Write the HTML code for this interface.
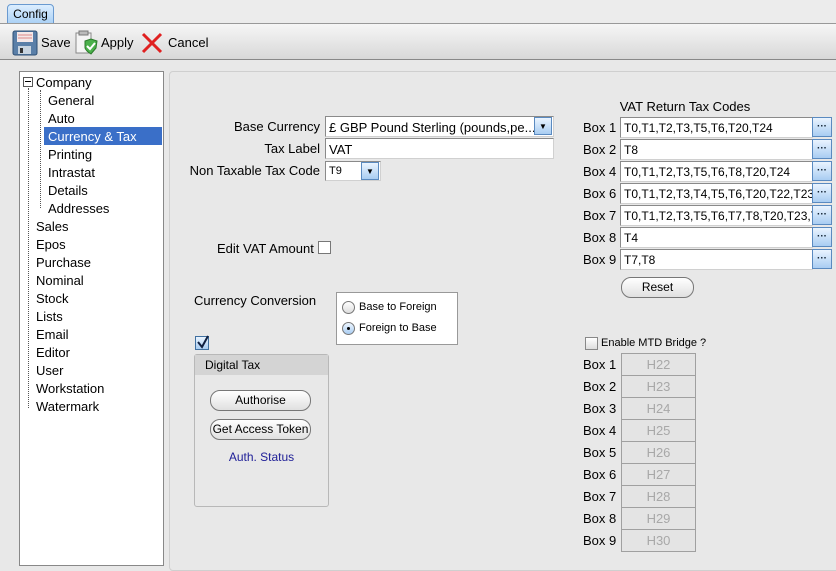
<!DOCTYPE html>
<html><head><style>
*{box-sizing:border-box;margin:0;padding:0}
body{width:836px;height:562px;overflow:hidden;background:#e8e8e8;font-family:"Liberation Sans",sans-serif;font-size:12px;color:#000;position:relative}
.a{position:absolute;white-space:nowrap}
.r{text-align:right}
.fld{position:absolute;background:#fff;border:1px solid #8a8a8a;border-right-color:#d0d0d0;border-bottom-color:#d0d0d0;height:21px;padding:3px 0 0 3px;overflow:hidden;white-space:nowrap}
.btn{position:absolute;width:20px;height:20px;border:1px solid #5a8ac0;background:linear-gradient(#eaf4ff,#a9cdf2);font-size:10px;font-weight:bold;text-align:center;line-height:18px;color:#123}
.dd{position:absolute;width:18px;height:18px;border:1px solid #5a8ac0;background:linear-gradient(#eaf4ff,#a9cdf2);font-size:8px;text-align:center;line-height:17px}
.pb{position:absolute;border:1px solid #777;border-radius:10px;background:linear-gradient(#fff,#e0e0e0);text-align:center;height:21px;line-height:19px}
.mtd{position:absolute;left:621px;width:75px;height:23px;border:1px solid #a0a0a0;background:#e4e4e4;color:#a8a8a8;text-align:center;line-height:21px;font-size:13px}
.ml{position:absolute;left:583px;font-size:13px}
.t{position:absolute;font-size:13px}
</style></head><body>
<div class="a" style="left:0;top:0;width:836px;height:24px;background:#ececec"></div>
<div class="a" style="left:7px;top:4px;width:47px;height:21px;border:1px solid #6a9ad0;border-radius:4px 4px 0 0;background:linear-gradient(#dceeff,#a9d0f5);text-align:center;line-height:19px;font-size:12px">Config</div>
<div class="a" style="left:0;top:23px;width:836px;height:37px;background:linear-gradient(#f6f6f6,#d8d8d8);border-top:1px solid #999;border-bottom:1px solid #888"></div>
<svg class="a" style="left:12px;top:30px" width="26" height="26" viewBox="0 0 26 26"><rect x="1" y="1" width="24" height="24" rx="2" fill="#5a7fa8" stroke="#2f4f74"/><rect x="5" y="2" width="16" height="10" fill="#f4e8e8"/><line x1="6" y1="5" x2="20" y2="5" stroke="#d88"/><line x1="6" y1="8" x2="20" y2="8" stroke="#d88"/><rect x="6" y="16" width="13" height="8" fill="#c8d4e0"/><rect x="8" y="18" width="3" height="5" fill="#333"/></svg>
<div class="t" style="left:41px;top:35px">Save</div>
<svg class="a" style="left:73px;top:30px" width="26" height="26" viewBox="0 0 26 26"><rect x="3" y="3" width="15" height="20" fill="#f4f4f4" stroke="#888"/><rect x="6" y="1" width="9" height="4" fill="#bbb" stroke="#777"/><path d="M12 11 L18 9 L24 11 L23 18 Q18 24 18 24 Q13 21 12 18Z" fill="#4bb04b" stroke="#2a7a2a"/><path d="M14 16 L17 19 L22 13" stroke="#fff" stroke-width="2" fill="none"/></svg>
<div class="t" style="left:101px;top:35px">Apply</div>
<svg class="a" style="left:140px;top:31px" width="24" height="24"><path d="M3 3 L21 21 M21 3 L3 21" stroke="#e02020" stroke-width="3"/></svg>
<div class="t" style="left:168px;top:35px">Cancel</div>

<div class="a" style="left:19px;top:71px;width:145px;height:495px;background:#fff;border:1px solid #888"></div>
<div class="a" style="left:23px;top:77px;width:10px;height:10px;border:1px solid #555;background:#fff"></div>
<div class="a" style="left:25px;top:81px;width:6px;height:1px;background:#000"></div>
<div class="a" style="left:28px;top:88px;width:0;height:320px;border-left:1px dotted #555"></div>
<div class="a" style="left:40px;top:90px;width:0;height:118px;border-left:1px dotted #555"></div>
<div class="a" style="left:44px;top:127px;width:118px;height:18px;background:#3a6fc8"></div>
<div class="t" style="left:36px;top:75px">Company</div>
<div class="t" style="left:48px;top:93px">General</div>
<div class="t" style="left:48px;top:111px">Auto</div>
<div class="t" style="left:48px;top:129px;color:#fff">Currency &amp; Tax</div>
<div class="t" style="left:48px;top:147px">Printing</div>
<div class="t" style="left:48px;top:165px">Intrastat</div>
<div class="t" style="left:48px;top:183px">Details</div>
<div class="t" style="left:48px;top:201px">Addresses</div>
<div class="t" style="left:36px;top:219px">Sales</div>
<div class="t" style="left:36px;top:237px">Epos</div>
<div class="t" style="left:36px;top:255px">Purchase</div>
<div class="t" style="left:36px;top:273px">Nominal</div>
<div class="t" style="left:36px;top:291px">Stock</div>
<div class="t" style="left:36px;top:309px">Lists</div>
<div class="t" style="left:36px;top:327px">Email</div>
<div class="t" style="left:36px;top:345px">Editor</div>
<div class="t" style="left:36px;top:363px">User</div>
<div class="t" style="left:36px;top:381px">Workstation</div>
<div class="t" style="left:36px;top:399px">Watermark</div>

<div class="a" style="left:169px;top:71px;width:680px;height:500px;border:1px solid #cfcfcf;border-radius:4px"></div>

<div class="t r" style="left:180px;width:140px;top:119px">Base Currency</div>
<div class="fld" style="left:325px;top:116px;width:229px;font-size:13px">£ GBP Pound Sterling (pounds,pe...</div>
<div class="dd" style="left:534px;top:117px">▼</div>
<div class="t r" style="left:180px;width:140px;top:141px">Tax Label</div>
<div class="fld" style="left:325px;top:138px;width:229px;font-size:13px">VAT</div>
<div class="t r" style="left:180px;width:140px;top:163px">Non Taxable Tax Code</div>
<div class="fld" style="left:325px;top:161px;width:56px;height:20px;font-size:11px">T9</div>
<div class="dd" style="left:361px;top:162px">▼</div>

<div class="t" style="left:217px;top:241px">Edit VAT Amount</div>
<div class="a" style="left:318px;top:241px;width:13px;height:13px;border:1px solid #777;background:#fff"></div>

<div class="t" style="left:194px;top:293px">Currency Conversion</div>
<div class="a" style="left:336px;top:292px;width:122px;height:53px;background:#fff;border:1px solid #999"></div>
<div class="a" style="left:342px;top:301px;width:13px;height:13px;border:1px solid #777;border-radius:50%;background:linear-gradient(#fff,#ddd)"></div>
<div class="a" style="left:359px;top:301px;font-size:11px">Base to Foreign</div>
<div class="a" style="left:342px;top:322px;width:13px;height:13px;border:1px solid #777;border-radius:50%;background:linear-gradient(#eef6ff,#a9cdf2)"></div>
<div class="a" style="left:347px;top:327px;width:3px;height:3px;border-radius:50%;background:#000"></div>
<div class="a" style="left:359px;top:322px;font-size:11px">Foreign to Base</div>

<div class="a" style="left:195px;top:336px;width:14px;height:14px;border:1px solid #4070a0;background:linear-gradient(#eaf4ff,#a9cdf2)"></div>
<svg class="a" style="left:196px;top:335px" width="14" height="14"><path d="M2 7 L6 12 L12 1" stroke="#102040" stroke-width="2" fill="none"/></svg>
<div class="a" style="left:194px;top:354px;width:135px;height:153px;border:1px solid #b8b8b8;border-radius:3px;background:#e8e8e8"></div>
<div class="a" style="left:195px;top:355px;width:133px;height:20px;background:#d4d4d4;padding:3px 0 0 10px;font-size:12px">Digital Tax</div>
<div class="pb" style="left:210px;top:390px;width:101px">Authorise</div>
<div class="pb" style="left:210px;top:419px;width:101px">Get Access Token</div>
<div class="a" style="left:194px;width:135px;text-align:center;top:450px;color:#202098;font-size:12px">Auth. Status</div>

<div class="t" style="left:570px;width:230px;text-align:center;top:99px">VAT Return Tax Codes</div>
<div class="ml" style="top:120px">Box 1</div><div class="fld" style="left:620px;top:117px;width:193px">T0,T1,T2,T3,T5,T6,T20,T24</div><div class="btn" style="left:812px;top:117px">···</div>
<div class="ml" style="top:142px">Box 2</div><div class="fld" style="left:620px;top:139px;width:193px">T8</div><div class="btn" style="left:812px;top:139px">···</div>
<div class="ml" style="top:164px">Box 4</div><div class="fld" style="left:620px;top:161px;width:193px">T0,T1,T2,T3,T5,T6,T8,T20,T24</div><div class="btn" style="left:812px;top:161px">···</div>
<div class="ml" style="top:186px">Box 6</div><div class="fld" style="left:620px;top:183px;width:193px">T0,T1,T2,T3,T4,T5,T6,T20,T22,T23,T24</div><div class="btn" style="left:812px;top:183px">···</div>
<div class="ml" style="top:208px">Box 7</div><div class="fld" style="left:620px;top:205px;width:193px">T0,T1,T2,T3,T5,T6,T7,T8,T20,T23,T24</div><div class="btn" style="left:812px;top:205px">···</div>
<div class="ml" style="top:230px">Box 8</div><div class="fld" style="left:620px;top:227px;width:193px">T4</div><div class="btn" style="left:812px;top:227px">···</div>
<div class="ml" style="top:252px">Box 9</div><div class="fld" style="left:620px;top:249px;width:193px">T7,T8</div><div class="btn" style="left:812px;top:249px">···</div>
<div class="pb" style="left:621px;top:277px;width:73px">Reset</div>

<div class="a" style="left:585px;top:337px;width:13px;height:13px;border:1px solid #888;background:linear-gradient(#fff,#ddd)"></div>
<div class="a" style="left:601px;top:337px;font-size:11px">Enable MTD Bridge ?</div>
<div class="ml" style="top:357px">Box 1</div><div class="mtd" style="top:353px">H22</div>
<div class="ml" style="top:379px">Box 2</div><div class="mtd" style="top:375px">H23</div>
<div class="ml" style="top:401px">Box 3</div><div class="mtd" style="top:397px">H24</div>
<div class="ml" style="top:423px">Box 4</div><div class="mtd" style="top:419px">H25</div>
<div class="ml" style="top:445px">Box 5</div><div class="mtd" style="top:441px">H26</div>
<div class="ml" style="top:467px">Box 6</div><div class="mtd" style="top:463px">H27</div>
<div class="ml" style="top:489px">Box 7</div><div class="mtd" style="top:485px">H28</div>
<div class="ml" style="top:511px">Box 8</div><div class="mtd" style="top:507px">H29</div>
<div class="ml" style="top:533px">Box 9</div><div class="mtd" style="top:529px">H30</div>
</body></html>
